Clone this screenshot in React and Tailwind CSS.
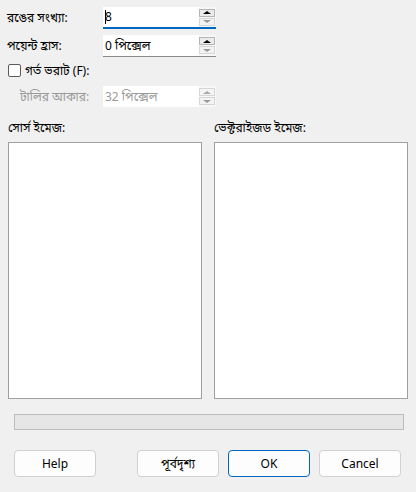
import React from 'react'

const FONT = "font-['Segoe_UI','Nirmala_UI','Noto_Sans','Noto_Sans_Bengali',sans-serif]"

function Spinner({ disabled }) {
  return (
    <div className="flex flex-col justify-center gap-[1px] w-[16px] h-full">
      <div className={`h-[8px] border flex items-center justify-center ${disabled ? 'border-[#d6d6d6] bg-[#f5f5f5]' : 'border-[#b4b4b4] bg-[#ebebeb]'}`}>
        <span className={`block w-0 h-0 border-l-[4px] border-r-[4px] border-b-[3px] border-l-transparent border-r-transparent ${disabled ? 'border-b-[#a8a8a8]' : 'border-b-black'}`} />
      </div>
      <div className="h-[8px] border border-[#d6d6d6] bg-[#f3f3f3] flex items-center justify-center">
        <span className="block w-0 h-0 border-l-[4px] border-r-[4px] border-t-[3px] border-l-transparent border-r-transparent border-t-[#9a9a9a]" />
      </div>
    </div>
  )
}

function SpinBox({ value, focused, disabled }) {
  return (
    <div className={`flex w-[113px] h-[22px] ${disabled ? 'border-b border-transparent' : focused ? 'border-b-2 border-[#0067c0]' : 'border-b border-[#8a8a8a]'}`}>
      <div className={`flex-1 flex items-center pl-[2px] bg-white ${disabled ? 'text-[#9a9a9a]' : 'text-black'}`}>
        {focused && <span className="w-px h-[14px] bg-black mr-[-1px]" />}
        {value}
      </div>
      <div className="bg-[#f7f7f7] pr-[1px] flex items-center">
        <Spinner disabled={disabled} />
      </div>
    </div>
  )
}

function Button({ children, primary }) {
  return (
    <button className={`w-[82px] h-[27px] rounded-[4px] bg-[#fdfdfd] text-[12px] text-black ${primary ? 'border border-[#0067c0]' : 'border border-[#d0d0d0]'}`}>
      {children}
    </button>
  )
}

export default function App() {
  return (
    <div className={`w-[416px] h-[492px] bg-[#f0f0f0] text-[12px] text-black pt-[7px] ${FONT}`}>
      {/* settings */}
      <div className="flex items-center h-[22px]">
        <span className="w-[103px] pl-[7px]">রঙের সংখ্যা:</span>
        <SpinBox value="8" focused />
      </div>
      <div className="flex items-center h-[22px] mt-[6px]">
        <span className="w-[103px] pl-[7px]">পয়েন্ট হ্রাস:</span>
        <SpinBox value="0 পিক্সেল" />
      </div>
      <label className="flex items-center h-[13px] mt-[7px] pl-[8px]">
        <span className="w-[13px] h-[13px] border border-[#5a5a5a] rounded-[2px] bg-white" />
        <span className="ml-[4px]">গর্ত ভরাট (F):</span>
      </label>
      <div className="flex items-center h-[22px] mt-[9px]">
        <span className="w-[103px] pl-[20px] text-[#9a9a9a]">টালির আকার:</span>
        <SpinBox value="32 পিক্সেল" disabled />
      </div>

      {/* previews */}
      <div className="flex gap-[12px] px-[8px] mt-[12px]">
        <div className="w-[194px] flex flex-col">
          <span className="h-[16px] leading-[16px]">সোর্স ইমেজ:</span>
          <div className="mt-[6px] h-[257px] bg-white border border-[#a0a0a0]" />
        </div>
        <div className="w-[194px] flex flex-col">
          <span className="h-[16px] leading-[16px]">ভেক্টরাইজড ইমেজ:</span>
          <div className="mt-[6px] h-[257px] bg-white border border-[#a0a0a0]" />
        </div>
      </div>

      {/* progress */}
      <div className="ml-[14px] w-[390px] mt-[15px] h-[16px] bg-[#e6e6e6] border border-[#bcbcbc]" />

      {/* buttons */}
      <div className="flex items-center mt-[20px] pl-[14px]">
        <Button>Help</Button>
        <div className="ml-[41px] flex gap-[9px]">
          <Button>পূর্বদৃশ্য</Button>
          <Button primary>OK</Button>
          <Button>Cancel</Button>
        </div>
      </div>
    </div>
  )
}
